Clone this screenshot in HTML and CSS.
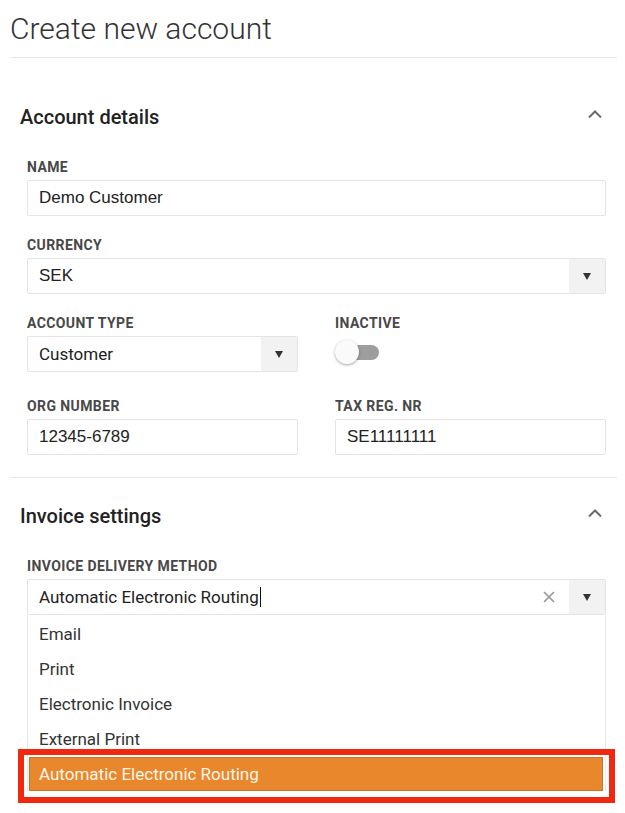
FILE: index.html
```html
<!DOCTYPE html>
<html lang="en">
<head>
    <meta charset="UTF-8" />
    <title>Create new account</title>
    <link rel="stylesheet" href="styles.css">
</head>
<body>
    <div class="page">
        <header class="page-head">
            <h1>Create new account</h1>
        </header>

        <section class="panel">
            <div class="panel-head">
                <h2>Account details</h2>
                <svg class="chevron" width="14" height="8" viewBox="0 0 14 8"><polyline points="1,7.5 7,1.5 13,7.5" fill="none" stroke="#6a6a6a" stroke-width="2"/></svg>
            </div>
            <div class="panel-body">
                <div class="field">
                    <label>Name</label>
                    <div class="box"><span class="value plain">Demo Customer</span></div>
                </div>
                <div class="field">
                    <label>Currency</label>
                    <div class="box">
                        <span class="value plain">SEK</span>
                        <span class="arrow-cell"><span class="arrow"></span></span>
                    </div>
                </div>
                <div class="row">
                    <div class="field">
                        <label>Account type</label>
                        <div class="box">
                            <span class="value">Customer</span>
                            <span class="arrow-cell"><span class="arrow"></span></span>
                        </div>
                    </div>
                    <div class="field">
                        <label>Inactive</label>
                        <div class="toggle">
                            <span class="knob"></span>
                            <span class="track"></span>
                        </div>
                    </div>
                </div>
                <div class="row row-last">
                    <div class="field">
                        <label>Org number</label>
                        <div class="box"><span class="value plain">12345-6789</span></div>
                    </div>
                    <div class="field">
                        <label>Tax reg. nr</label>
                        <div class="box"><span class="value plain">SE11111111</span></div>
                    </div>
                </div>
            </div>
        </section>

        <section class="panel panel-open">
            <div class="panel-head">
                <h2>Invoice settings</h2>
                <svg class="chevron" width="14" height="8" viewBox="0 0 14 8"><polyline points="1,7.5 7,1.5 13,7.5" fill="none" stroke="#6a6a6a" stroke-width="2"/></svg>
            </div>
            <div class="panel-body">
                <div class="field field-last">
                    <label>Invoice delivery method</label>
                    <div class="box">
                        <span class="value">Automatic Electronic Routing<span class="caret"></span></span>
                        <span class="clear">
                            <svg width="12" height="12" viewBox="0 0 12 12"><path d="M1 1 L11 11 M11 1 L1 11" stroke="#9a9a9a" stroke-width="1.7"/></svg>
                        </span>
                        <span class="arrow-cell"><span class="arrow"></span></span>
                    </div>
                    <ul class="options">
                        <li>Email</li>
                        <li>Print</li>
                        <li>Electronic Invoice</li>
                        <li>External Print</li>
                        <li class="active">Automatic Electronic Routing</li>
                    </ul>
                </div>
            </div>
        </section>
    </div>
</body>
</html>
```

FILE: styles.css
```css
body {
    margin: 0;
    font-family: Roboto, "Liberation Sans", Arial, sans-serif;
    background: #fff;
    color: #333;
}
.page {
    padding: 0 8px 0 10px;
}
.page-head {
    padding-top: 12px;
    padding-bottom: 11px;
    border-bottom: 1px solid #e6e6e6;
    margin-bottom: 21px;
}
h1 {
    margin: 0;
    font-size: 30px;
    line-height: 34px;
    font-weight: 300;
    color: #333;
}
.panel {
    border-bottom: 1px solid #e6e6e6;
}
.panel-open {
    border-bottom: none;
}
.panel-head {
    display: flex;
    align-items: center;
    justify-content: space-between;
    padding: 26px 15px 0 10px;
}
.panel-head h2 {
    margin: 0;
    font-size: 20px;
    line-height: 24px;
    font-weight: 500;
    color: #222;
}
.chevron {
    margin-bottom: 7px;
}
.panel-body {
    padding: 30px 11px 22px 17px;
}
.field {
    margin-bottom: 21px;
}
.field label {
    display: block;
    font-size: 14px;
    line-height: 16px;
    font-weight: 700;
    letter-spacing: 0.4px;
    text-transform: uppercase;
    color: #484848;
    margin-bottom: 5px;
}
.row {
    display: grid;
    grid-template-columns: 1fr 1fr;
    column-gap: 37px;
    margin-bottom: 5px;
}
.row-last, .row-last .field, .field-last {
    margin-bottom: 0;
}
.box {
    display: flex;
    align-items: stretch;
    height: 36px;
    box-sizing: border-box;
    border: 1px solid #e4e4e4;
    border-radius: 2px;
    background: #fff;
}
.value {
    flex: 1;
    display: flex;
    align-items: center;
    padding: 0 11px;
    font-size: 17px;
    color: #222;
}
.value.plain {
    font-family: "Liberation Sans", Arial, sans-serif;
    font-size: 17px;
}
.caret {
    display: inline-block;
    width: 1px;
    height: 20px;
    background: #111;
    margin-left: 1px;
}
.clear {
    display: flex;
    align-items: center;
    padding-right: 14px;
}
.arrow-cell {
    width: 36px;
    display: flex;
    align-items: center;
    justify-content: center;
    background: #f2f2f2;
}
.arrow {
    width: 0;
    height: 0;
    border-left: 4.5px solid transparent;
    border-right: 4.5px solid transparent;
    border-top: 7px solid #333;
}
.toggle {
    display: flex;
    align-items: center;
    margin-top: 9px;
    height: 24px;
}
.knob {
    position: relative;
    z-index: 1;
    width: 24px;
    height: 24px;
    border-radius: 50%;
    background: #fafafa;
    box-shadow: 0 1px 3px rgba(0, 0, 0, 0.35);
}
.track {
    width: 34px;
    height: 15px;
    margin-left: -14px;
    border-radius: 0 8px 8px 0;
    background: #9e9e9e;
}
.options {
    list-style: none;
    margin: 0;
    padding: 2px 0 0;
    border-left: 1px solid #e8e8e8;
    border-right: 1px solid #e8e8e8;
}
.options li {
    height: 35px;
    line-height: 35px;
    padding: 0 11px;
    font-size: 17px;
    color: #333;
}
.options li.active {
    position: relative;
    height: 34px;
    line-height: 32px;
    margin: 0 2px 0 1px;
    padding: 0 9px;
    box-sizing: border-box;
    background: #e8872b;
    border: 1px solid #c6752b;
    color: #fff6ea;
}
.options li.active::after {
    content: "";
    position: absolute;
    top: -9px;
    left: -12px;
    right: -13px;
    bottom: -13px;
    border: 6px solid #f0280f;
}
```
